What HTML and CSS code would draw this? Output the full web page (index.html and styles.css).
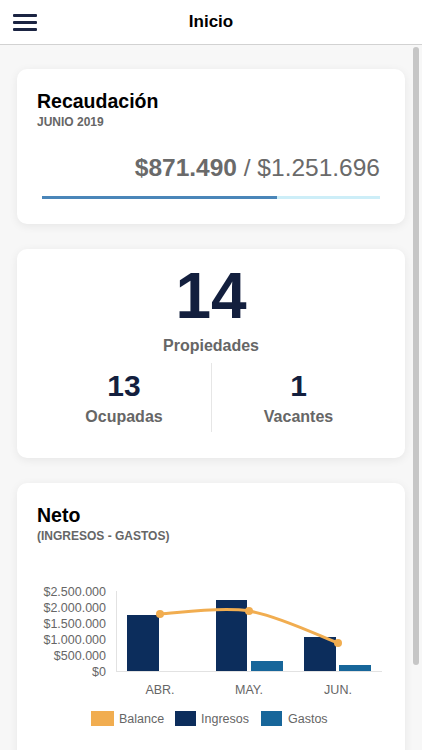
FILE: index.html
```html
<!DOCTYPE html>
<html lang="es">
<head>
<meta charset="utf-8">
<title>Inicio</title>
<link rel="stylesheet" href="styles.css">
</head>
<body>
<header class="topbar">
  <div class="menu-btn" aria-label="Menú">
    <span></span><span></span><span></span>
  </div>
  <h1 class="topbar-title">Inicio</h1>
  <div class="topbar-spacer"></div>
</header>

<main class="content">
  <section class="card card-recaudacion">
    <h2 class="card-title">Recaudación</h2>
    <div class="card-sub">JUNIO 2019</div>
    <div class="amount"><strong>$871.490</strong> / $1.251.696</div>
    <div class="progress"><div class="progress-fill" style="width: 69.6%"></div></div>
  </section>

  <section class="card card-props">
    <div class="big-number">14</div>
    <div class="stat-label">Propiedades</div>
    <div class="stat-row">
      <div class="stat-col">
        <div class="mid-number">13</div>
        <div class="stat-label">Ocupadas</div>
      </div>
      <div class="stat-col stat-col-divided">
        <div class="mid-number">1</div>
        <div class="stat-label">Vacantes</div>
      </div>
    </div>
  </section>

  <section class="card card-neto">
    <h2 class="card-title">Neto</h2>
    <div class="card-sub">(INGRESOS - GASTOS)</div>
    <svg class="chart" width="388" height="200" viewBox="17 560 388 200">
      <g class="ylabels">
        <text x="106" y="596.5">$2.500.000</text>
        <text x="106" y="612.5">$2.000.000</text>
        <text x="106" y="628.5">$1.500.000</text>
        <text x="106" y="644.5">$1.000.000</text>
        <text x="106" y="660.5">$500.000</text>
        <text x="106" y="676.5">$0</text>
      </g>
      <line x1="116.5" y1="592" x2="116.5" y2="672" stroke="#e2e2e2" stroke-width="1"/>
      <line x1="116" y1="672.5" x2="382" y2="672.5" stroke="#e2e2e2" stroke-width="1"/>
      <rect x="127" y="616" width="32" height="56" fill="#0c2d5c"/>
      <rect x="216" y="601" width="31" height="71" fill="#0c2d5c"/>
      <rect x="251" y="662" width="32" height="10" fill="#17669a"/>
      <rect x="304" y="638" width="32" height="34" fill="#0c2d5c"/>
      <rect x="339" y="666" width="32" height="6" fill="#17669a"/>
      <path d="M160,615 C174.8,614.5 219.3,607.2 249,612 C278.7,616.8 323.2,638.7 338,644" fill="none" stroke="#f1ad50" stroke-width="3"/>
      <circle cx="160" cy="615" r="4" fill="#f1ad50"/>
      <circle cx="249" cy="612" r="4" fill="#f1ad50"/>
      <circle cx="338" cy="644" r="4" fill="#f1ad50"/>
      <g class="xlabels">
        <text x="160" y="694.5">ABR.</text>
        <text x="249" y="694.5">MAY.</text>
        <text x="338" y="694.5">JUN.</text>
      </g>
      <g class="legend">
        <rect x="91" y="712" width="23" height="15" fill="#f1ad50"/>
        <text x="119" y="724">Balance</text>
        <rect x="175" y="712" width="21" height="15" fill="#0c2d5c"/>
        <text x="201" y="724">Ingresos</text>
        <rect x="261" y="712" width="21" height="15" fill="#17669a"/>
        <text x="288" y="724">Gastos</text>
      </g>
    </svg>
  </section>
</main>

<div class="scrollbar"></div>
</body>
</html>
```

FILE: styles.css
```css
html, body {
  margin: 0;
  padding: 0;
  height: 100%;
  overflow: hidden;
}

body {
  background: #f7f7f7;
  font-family: "Liberation Sans", Arial, sans-serif;
  color: #000;
}

.topbar {
  height: 44px;
  background: #fff;
  border-bottom: 1px solid #d2d2d2;
  display: grid;
  grid-template-columns: 1fr auto 1fr;
  align-items: center;
  box-sizing: content-box;
}

.menu-btn {
  padding-left: 13px;
  display: flex;
  flex-direction: column;
  gap: 4.5px;
  padding-top: 1px;
}

.menu-btn span {
  display: block;
  width: 24px;
  height: 2.5px;
  background: #1b2442;
  border-radius: 1px;
}

.topbar-title {
  margin: 0;
  font-size: 17px;
  font-weight: bold;
  line-height: 20px;
}

.content {
  padding: 24px 17px 0 17px;
  display: flex;
  flex-direction: column;
  gap: 25px;
  width: 388px;
}

.card {
  background: #fff;
  border-radius: 10px;
  box-shadow: 0 2px 10px rgba(0, 0, 0, 0.07);
  padding: 21px 20px 0 20px;
}

.card-title {
  margin: 0;
  font-size: 19.5px;
  line-height: 23px;
  font-weight: bold;
}

.card-sub {
  font-size: 12px;
  line-height: 14px;
  font-weight: bold;
  color: #666;
  margin-top: 2px;
}

.card-recaudacion {
  padding-bottom: 25px;
}

.amount {
  margin: 25px 5px 0 5px;
  text-align: right;
  font-size: 24.5px;
  line-height: 28px;
  color: #6a6a6a;
}

.amount strong {
  font-weight: bold;
}

.progress {
  margin: 14px 5px 0 5px;
  height: 3px;
  background: #cdeef8;
}

.progress-fill {
  height: 100%;
  background: #4a86b9;
}

.card-props {
  padding: 11px 20px 26px 20px;
  text-align: center;
}

.big-number {
  font-size: 64px;
  line-height: 72px;
  font-weight: bold;
  color: #131f3e;
}

.stat-label {
  font-size: 16px;
  line-height: 20px;
  font-weight: bold;
  color: #666;
}

.card-props > .stat-label {
  margin-top: 4px;
}

.stat-row {
  display: grid;
  grid-template-columns: 1fr 1fr;
  margin-top: 7px;
}

.stat-col {
  padding: 6px 0 5px 0;
}

.stat-col-divided {
  border-left: 1px solid #e6e6e6;
}

.mid-number {
  font-size: 30px;
  line-height: 34px;
  font-weight: bold;
  color: #131f3e;
  margin-bottom: 4px;
}

.card-neto {
  height: 400px;
}

.chart {
  display: block;
  margin: 16px 0 0 -20px;
  font-family: "Liberation Sans", Arial, sans-serif;
}

.ylabels text {
  font-size: 12.5px;
  fill: #666;
  text-anchor: end;
}

.xlabels text {
  font-size: 12.5px;
  fill: #666;
  text-anchor: middle;
}

.legend text {
  font-size: 12.5px;
  fill: #666;
}

.scrollbar {
  position: fixed;
  left: 413px;
  top: 47px;
  width: 6px;
  height: 618px;
  border-radius: 3px;
  background: #c6c6c6;
}
```
